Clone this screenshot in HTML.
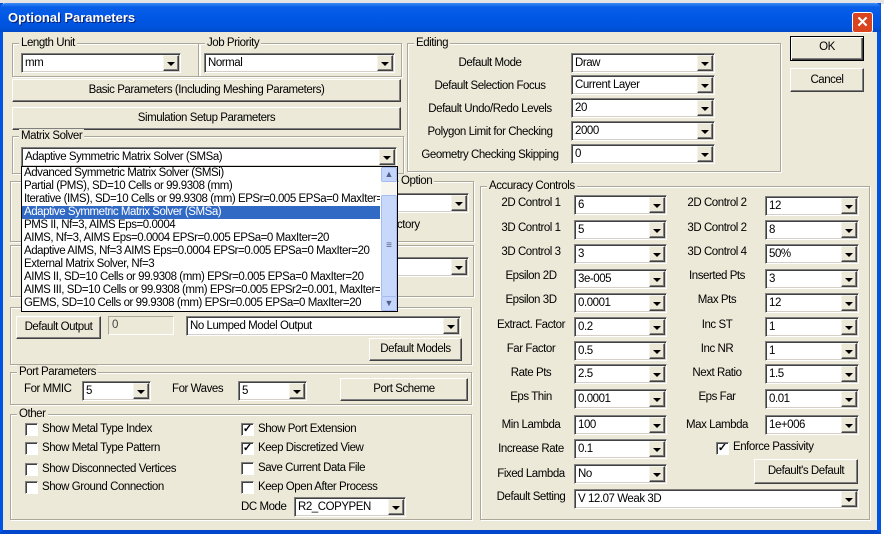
<!DOCTYPE html>
<html><head><meta charset="utf-8"><style>
*{margin:0;padding:0}
body{width:884px;height:534px;position:relative;overflow:hidden;background:#fff;font-family:"Liberation Sans",sans-serif;font-size:11.5px;letter-spacing:-0.45px;color:#000}
#dlg{position:absolute;left:0;top:3px;width:881px;height:531px;background:#ece9d8;border-left:3px solid #0054e3;border-right:4px solid #0054e3;border-bottom:4px solid #0047cc;box-sizing:border-box}
#tb{position:absolute;left:0;top:3px;width:881px;height:29px;background:linear-gradient(#3d8cf5 0,#0a5fe8 4px,#0058e6 14px,#0053dc 24px,#0048c8 29px);border-radius:6px 6px 0 0}
#tb span{position:absolute;left:8px;top:7px;color:#fff;font-weight:bold;font-size:13px;letter-spacing:0;text-shadow:1px 1px #0a1f6f}
#cl{position:absolute;left:852px;top:9px;width:21px;height:21px;background:#d9431e;border:1px solid #fff;border-radius:3px;box-sizing:border-box;color:#fff;font-size:15px;font-weight:bold;text-align:center;line-height:19px;letter-spacing:0}
.g{position:absolute;border:1px solid #aca899;box-shadow:1px 1px #fff,inset 1px 1px #fff}
.g>span{position:absolute;top:-8px;left:6px;background:#ece9d8;padding:0 2px;line-height:14px;white-space:nowrap}
.c{position:absolute;background:#fff;border:1px solid;border-color:#808080 #fff #fff #808080;box-shadow:inset 1px 1px #404040,inset -1px -1px #d4d0c8;padding-left:3px;box-sizing:border-box;line-height:18px;height:20px;white-space:nowrap;overflow:hidden}
.c::before{content:"";position:absolute;right:1px;top:1px;bottom:1px;width:16px;background:#ece9d8;border:1px solid;border-color:#f4f3ee #404040 #404040 #f4f3ee;box-shadow:inset -1px -1px #808080;box-sizing:border-box}
.c::after{content:"";position:absolute;right:6px;top:8px;border-top:4px solid #000;border-left:4px solid transparent;border-right:4px solid transparent;width:0;height:0;margin-right:-0.5px}
.b{position:absolute;background:#ece9d8;border:1px solid;border-color:#fff #404040 #404040 #fff;box-shadow:inset -1px -1px #808080;box-sizing:border-box;text-align:center;white-space:nowrap}
.l{position:absolute;white-space:nowrap;line-height:16px}
.lc{position:absolute;white-space:nowrap;line-height:16px;text-align:center}
.k{position:absolute;width:13px;height:13px;background:#fff;border:1px solid;border-color:#808080 #fff #fff #808080;box-shadow:inset 1px 1px #404040;box-sizing:border-box;font-size:11px;line-height:11px;text-align:center;font-weight:bold;letter-spacing:0}
#dd{position:absolute;left:21px;top:166px;width:377px;height:146px;background:#fff;border:1px solid #000;box-sizing:border-box}
#dd div.i{height:13px;line-height:13px;padding-left:2px;white-space:nowrap;overflow:hidden;width:356px}
#dd div.s{background:#316ac5;color:#fff}
#sb{position:absolute;right:0;top:0;width:16px;height:144px;background:#f7f6f1}
.sbb{position:absolute;left:0;width:16px;height:15px;background:#c5d5fb;border:1px solid #a4bcf0;box-sizing:border-box;border-radius:2px;color:#4d6185;font-size:9px;text-align:center;line-height:13px;letter-spacing:0}
</style></head><body>
<div style="position:absolute;left:0;top:0;width:884px;height:4px;background:#e4e4e4"></div>
<div id="dlg"></div>
<div id="tb"><span>Optional Parameters</span><div id="cl">✕</div></div>

<div class="g" style="left:12px;top:43px;width:186px;height:32px"><span>Length Unit</span></div>
<div class="c" style="left:21px;top:53px;width:160px">mm</div>
<div class="g" style="left:198px;top:43px;width:202px;height:32px"><span>Job Priority</span></div>
<div class="c" style="left:204px;top:53px;width:191px">Normal</div>
<div class="b" style="left:12px;top:79px;width:389px;height:23px;line-height:21px">Basic Parameters (Including Meshing Parameters)</div>
<div class="b" style="left:12px;top:107px;width:389px;height:23px;line-height:21px">Simulation Setup Parameters</div>
<div class="g" style="left:12px;top:136px;width:390px;height:36px"><span>Matrix Solver</span></div>
<div class="c" style="left:21px;top:147px;width:376px">Adaptive Symmetric Matrix Solver (SMSa)</div>

<div class="g" style="left:10px;top:181px;width:462px;height:59px"><span style="left:388px">Option</span></div>
<div class="c" style="left:380px;top:193px;width:89px"></div>
<div class="l" style="left:397px;top:217px">ctory</div>
<div class="g" style="left:10px;top:245px;width:462px;height:50px"></div>
<div class="c" style="left:380px;top:257px;width:89px"></div>
<div class="g" style="left:10px;top:307px;width:460px;height:56px"></div>
<div class="b" style="left:16px;top:316px;width:85px;height:23px;line-height:21px">Default Output</div>
<div style="position:absolute;left:108px;top:316px;width:66px;height:19px;background:#ece9d8;border:1px solid;border-color:#aca899 #fff #fff #aca899;box-sizing:border-box;padding-left:3px;line-height:17px;color:#444">0</div>
<div class="c" style="left:186px;top:316px;width:275px">No Lumped Model Output</div>
<div class="b" style="left:369px;top:338px;width:93px;height:23px;line-height:21px">Default Models</div>

<div id="dd">
<div class="i">Advanced Symmetric Matrix Solver (SMSi)</div>
<div class="i">Partial (PMS), SD=10 Cells or 99.9308 (mm)</div>
<div class="i">Iterative (IMS), SD=10 Cells or 99.9308 (mm) EPSr=0.005 EPSa=0 MaxIter=20</div>
<div class="i s">Adaptive Symmetric Matrix Solver (SMSa)</div>
<div class="i">PMS II, Nf=3, AIMS Eps=0.0004</div>
<div class="i">AIMS, Nf=3, AIMS Eps=0.0004 EPSr=0.005 EPSa=0 MaxIter=20</div>
<div class="i">Adaptive AIMS, Nf=3 AIMS Eps=0.0004 EPSr=0.005 EPSa=0 MaxIter=20</div>
<div class="i">External Matrix Solver, Nf=3</div>
<div class="i">AIMS II, SD=10 Cells or 99.9308 (mm) EPSr=0.005 EPSa=0 MaxIter=20</div>
<div class="i">AIMS III, SD=10 Cells or 99.9308 (mm) EPSr=0.005 EPSr2=0.001, MaxIter=20</div>
<div class="i">GEMS, SD=10 Cells or 99.9308 (mm) EPSr=0.005 EPSa=0 MaxIter=20</div>
<div id="sb">
<div class="sbb" style="top:0">▲</div>
<div class="sbb" style="top:28px;height:102px;line-height:100px;font-size:10px;background:#c8d8fb">≡</div>
<div class="sbb" style="top:129px">▼</div>
</div>
</div>

<div class="g" style="left:10px;top:372px;width:460px;height:31px"><span>Port Parameters</span></div>
<div class="l" style="left:24px;top:381px">For MMIC</div>
<div class="c" style="left:82px;top:381px;width:69px">5</div>
<div class="l" style="left:172px;top:381px">For Waves</div>
<div class="c" style="left:238px;top:381px;width:69px">5</div>
<div class="b" style="left:340px;top:378px;width:128px;height:23px;line-height:21px">Port Scheme</div>

<div class="g" style="left:10px;top:414px;width:460px;height:104px"><span>Other</span></div>
<div class="k" style="left:25px;top:423px"></div><div class="l" style="left:42px;top:421px">Show Metal Type Index</div>
<div class="k" style="left:25px;top:442px"></div><div class="l" style="left:42px;top:440px">Show Metal Type Pattern</div>
<div class="k" style="left:25px;top:463px"></div><div class="l" style="left:42px;top:461px">Show Disconnected Vertices</div>
<div class="k" style="left:25px;top:481px"></div><div class="l" style="left:42px;top:479px">Show Ground Connection</div>
<div class="k" style="left:241px;top:423px">✓</div><div class="l" style="left:258px;top:421px">Show Port Extension</div>
<div class="k" style="left:241px;top:442px">✓</div><div class="l" style="left:258px;top:440px">Keep Discretized View</div>
<div class="k" style="left:241px;top:462px"></div><div class="l" style="left:258px;top:460px">Save Current Data File</div>
<div class="k" style="left:241px;top:481px"></div><div class="l" style="left:258px;top:479px">Keep Open After Process</div>
<div class="l" style="left:241px;top:499px">DC Mode</div>
<div class="c" style="left:294px;top:497px;width:112px">R2_COPYPEN</div>

<div class="g" style="left:407px;top:43px;width:372px;height:127px"><span>Editing</span></div>
<div class="lc" style="left:410px;top:55px;width:160px">Default Mode</div><div class="c" style="left:571px;top:53px;width:144px">Draw</div>
<div class="lc" style="left:410px;top:78px;width:160px">Default Selection Focus</div><div class="c" style="left:571px;top:75px;width:144px">Current Layer</div>
<div class="lc" style="left:410px;top:101px;width:160px">Default Undo/Redo Levels</div><div class="c" style="left:571px;top:98px;width:144px">20</div>
<div class="lc" style="left:410px;top:124px;width:160px">Polygon Limit for Checking</div><div class="c" style="left:571px;top:121px;width:144px">2000</div>
<div class="lc" style="left:410px;top:147px;width:160px">Geometry Checking Skipping</div><div class="c" style="left:571px;top:144px;width:144px">0</div>

<div class="b" style="left:790px;top:36px;width:74px;height:25px;line-height:21px;border:1px solid #000;box-shadow:inset 1px 1px #fff,inset -1px -1px #404040,inset -2px -2px #808080">OK</div>
<div class="b" style="left:790px;top:68px;width:74px;height:24px;line-height:22px">Cancel</div>

<div class="g" style="left:480px;top:186px;width:388px;height:332px"><span>Accuracy Controls</span></div>
<div class="lc" style="left:486px;top:195px;width:90px">2D Control 1</div><div class="c" style="left:574px;top:195px;width:93px">6</div>
<div class="lc" style="left:672px;top:195px;width:90px">2D Control 2</div><div class="c" style="left:765px;top:196px;width:94px">12</div>
<div class="lc" style="left:486px;top:220px;width:90px">3D Control 1</div><div class="c" style="left:574px;top:220px;width:93px">5</div>
<div class="lc" style="left:672px;top:220px;width:90px">3D Control 2</div><div class="c" style="left:765px;top:220px;width:94px">8</div>
<div class="lc" style="left:486px;top:244px;width:90px">3D Control 3</div><div class="c" style="left:574px;top:244px;width:93px">3</div>
<div class="lc" style="left:672px;top:244px;width:90px">3D Control 4</div><div class="c" style="left:765px;top:244px;width:94px">50%</div>
<div class="lc" style="left:486px;top:268px;width:90px">Epsilon 2D</div><div class="c" style="left:574px;top:269px;width:93px">3e-005</div>
<div class="lc" style="left:672px;top:268px;width:90px">Inserted Pts</div><div class="c" style="left:765px;top:269px;width:94px">3</div>
<div class="lc" style="left:486px;top:292px;width:90px">Epsilon 3D</div><div class="c" style="left:574px;top:293px;width:93px">0.0001</div>
<div class="lc" style="left:672px;top:292px;width:90px">Max Pts</div><div class="c" style="left:765px;top:293px;width:94px">12</div>
<div class="lc" style="left:486px;top:317px;width:90px">Extract. Factor</div><div class="c" style="left:574px;top:317px;width:93px">0.2</div>
<div class="lc" style="left:672px;top:317px;width:90px">Inc ST</div><div class="c" style="left:765px;top:317px;width:94px">1</div>
<div class="lc" style="left:486px;top:341px;width:90px">Far Factor</div><div class="c" style="left:574px;top:341px;width:93px">0.5</div>
<div class="lc" style="left:672px;top:341px;width:90px">Inc NR</div><div class="c" style="left:765px;top:341px;width:94px">1</div>
<div class="lc" style="left:486px;top:365px;width:90px">Rate Pts</div><div class="c" style="left:574px;top:364px;width:93px">2.5</div>
<div class="lc" style="left:672px;top:365px;width:90px">Next Ratio</div><div class="c" style="left:765px;top:364px;width:94px">1.5</div>
<div class="lc" style="left:486px;top:389px;width:90px">Eps Thin</div><div class="c" style="left:574px;top:389px;width:93px">0.0001</div>
<div class="lc" style="left:672px;top:389px;width:90px">Eps Far</div><div class="c" style="left:765px;top:389px;width:94px">0.01</div>
<div class="lc" style="left:486px;top:417px;width:90px">Min Lambda</div><div class="c" style="left:574px;top:415px;width:93px">100</div>
<div class="lc" style="left:672px;top:417px;width:90px">Max Lambda</div><div class="c" style="left:765px;top:415px;width:94px">1e+006</div>
<div class="lc" style="left:486px;top:441px;width:90px">Increase Rate</div><div class="c" style="left:574px;top:439px;width:93px">0.1</div>
<div class="k" style="left:716px;top:442px">✓</div><div class="l" style="left:733px;top:439px">Enforce Passivity</div>
<div class="lc" style="left:486px;top:466px;width:90px">Fixed Lambda</div><div class="c" style="left:574px;top:464px;width:93px">No</div>
<div class="b" style="left:754px;top:459px;width:104px;height:25px;line-height:23px">Default's Default</div>
<div class="lc" style="left:486px;top:489px;width:90px">Default Setting</div><div class="c" style="left:574px;top:489px;width:285px">V 12.07 Weak 3D</div>
</body></html>
